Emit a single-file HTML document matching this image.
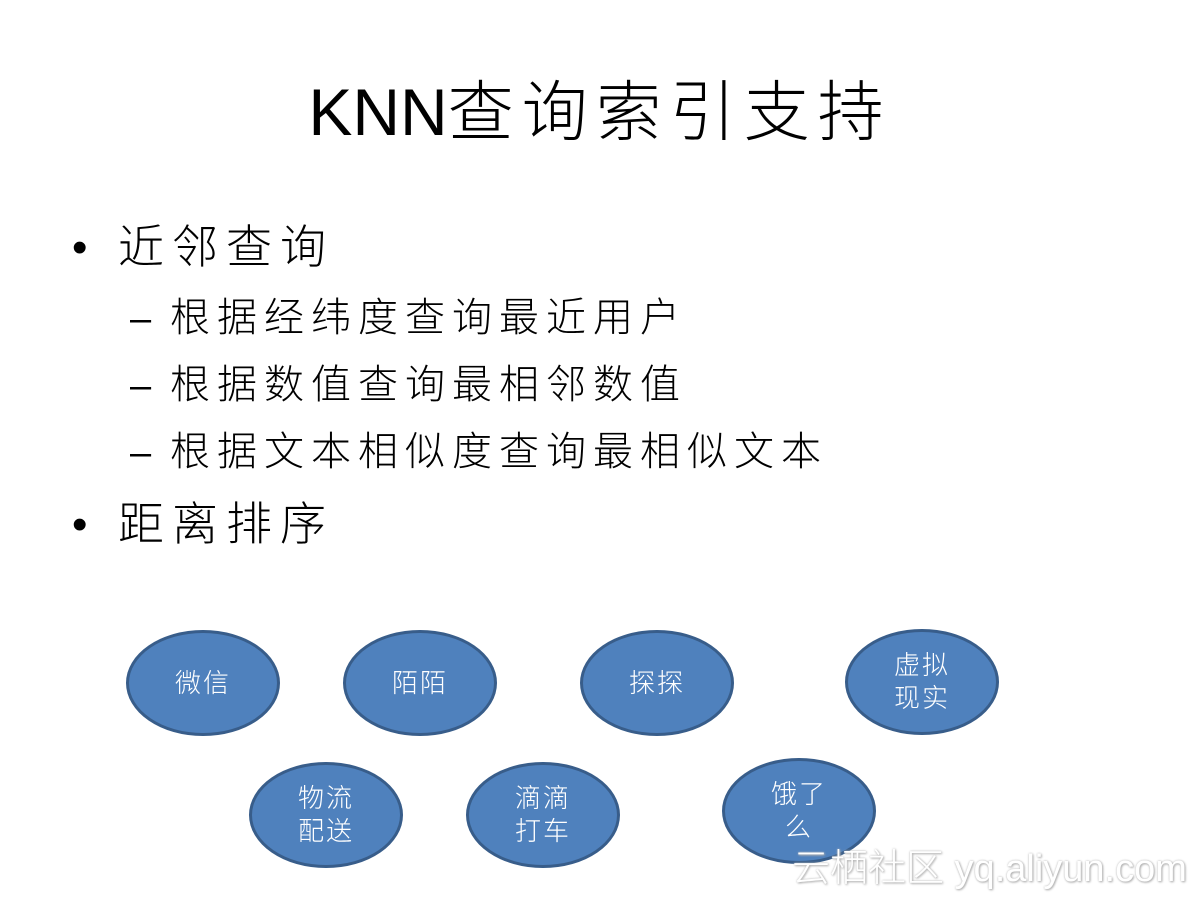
<!DOCTYPE html>
<html><head><meta charset="utf-8"><style>
body{margin:0;width:1200px;height:900px;background:#fff;position:relative;overflow:hidden;font-family:"Liberation Sans","Noto Sans CJK SC",sans-serif;color:#000}
.t{position:absolute;white-space:nowrap;font-weight:300}
.e{position:absolute;box-sizing:border-box;border:3px solid #385d8a;background:#4f81bd;border-radius:50%;color:#fff;font-size:26px;line-height:33px;display:flex;align-items:center;justify-content:center;text-align:center;width:154px;height:106px;letter-spacing:2px;font-weight:300}
</style></head><body>
<div class="t" style="left:0;width:1200px;text-align:center;top:70px;font-size:66px;line-height:84px">KNN<span style="letter-spacing:8px">查询索引支持</span></div>
<div class="t" style="left:72px;top:220px;font-size:44px;line-height:56px">•</div>
<div class="t" style="left:118px;top:218px;font-size:46px;line-height:58px;letter-spacing:8px">近邻查询</div>
<div class="t" style="left:130px;top:294px;font-size:38px;line-height:50px">–</div>
<div class="t" style="left:170px;top:293px;font-size:40px;line-height:50px;letter-spacing:7px">根据经纬度查询最近用户</div>
<div class="t" style="left:130px;top:361px;font-size:38px;line-height:50px">–</div>
<div class="t" style="left:170px;top:360px;font-size:40px;line-height:50px;letter-spacing:7px">根据数值查询最相邻数值</div>
<div class="t" style="left:130px;top:428px;font-size:38px;line-height:50px">–</div>
<div class="t" style="left:170px;top:427px;font-size:40px;line-height:50px;letter-spacing:7px">根据文本相似度查询最相似文本</div>
<div class="t" style="left:72px;top:497px;font-size:44px;line-height:56px">•</div>
<div class="t" style="left:118px;top:495px;font-size:46px;line-height:58px;letter-spacing:8px">距离排序</div>
<div class="e" style="left:126px;top:630px">微信</div>
<div class="e" style="left:343px;top:630px">陌陌</div>
<div class="e" style="left:580px;top:630px">探探</div>
<div class="e" style="left:845px;top:629px">虚拟<br>现实</div>
<div class="e" style="left:249px;top:762px">物流<br>配送</div>
<div class="e" style="left:466px;top:762px">滴滴<br>打车</div>
<div class="e" style="left:722px;top:758px">饿了<br>么</div>
<div class="t" style="left:792px;top:846px;font-size:38px;line-height:46px;color:#fff;text-shadow:0 0 2px #bbb,1px 1px 2px #aaa">云栖社区 yq.aliyun.com</div>
</body></html>
